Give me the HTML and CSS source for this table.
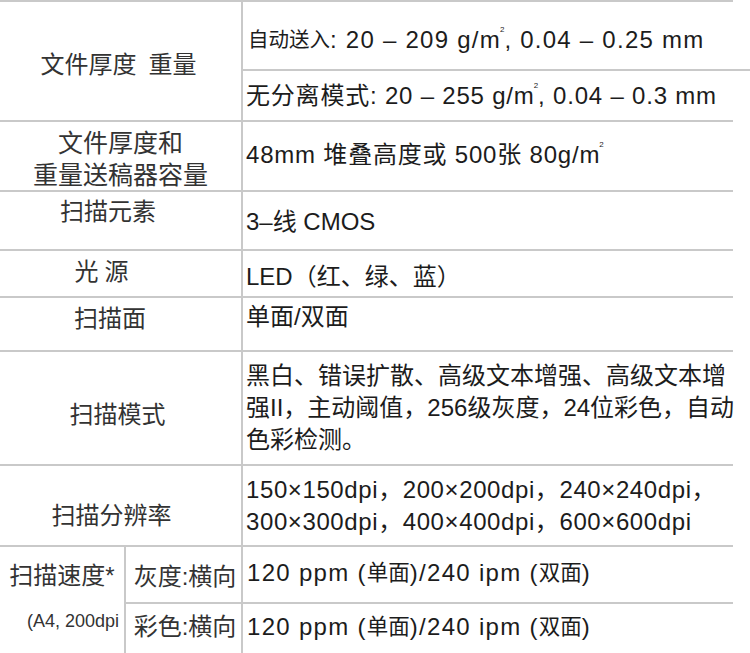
FILE: index.html
```html
<!DOCTYPE html>
<html lang="zh-CN">
<head>
<meta charset="utf-8">
<title>扫描规格</title>
<link rel="stylesheet" href="styles.css">
</head>
<body>
<div class="spec">
  <div class="cell lab lab-thick">文件厚度&ensp;重量</div>
  <div class="cell val val-auto"><span class="cjk-s">自动送入</span>: 20 – 209 g/m<span class="sq">2</span>, 0.04 – 0.25 mm</div>
  <div class="cell val val-sep">无分离模式: 20 – 255 g/m<span class="sq">2</span>, 0.04 – 0.3 mm</div>

  <div class="cell lab lab-feeder">文件厚度和<br>重量送稿器容量</div>
  <div class="cell val val-feeder">48mm 堆叠高度或 500张 80g/m<span class="sq">2</span></div>

  <div class="cell lab lab-sensor">扫描元素</div>
  <div class="cell val val-sensor">3–线 CMOS</div>

  <div class="cell lab lab-light">光源</div>
  <div class="cell val val-light">LED（红、绿、蓝）</div>

  <div class="cell lab lab-side">扫描面</div>
  <div class="cell val val-side">单面/双面</div>

  <div class="cell lab lab-mode">扫描模式</div>
  <div class="cell val val-mode">黑白、错误扩散、高级文本增强、高级文本增<br>强II，主动阈值，256级灰度，24位彩色，自动<br>色彩检测。</div>

  <div class="cell lab lab-res">扫描分辨率</div>
  <div class="cell val val-res">150×150dpi，200×200dpi，240×240dpi，<br>300×300dpi，400×400dpi，600×600dpi</div>

  <div class="cell speed">
    <div class="speed-title">扫描速度*</div>
    <div class="speed-note">(A4, 200dpi</div>
  </div>
  <div class="cell sub sub-gray">灰度:横向</div>
  <div class="cell val val-ppm val-gray">120 ppm (<span class="cjk-s2">单面</span>)/240 ipm (<span class="cjk-s2">双面</span>)</div>
  <div class="cell sub sub-color">彩色:横向</div>
  <div class="cell val val-ppm val-color">120 ppm (<span class="cjk-s2">单面</span>)/240 ipm (<span class="cjk-s2">双面</span>)</div>
</div>
</body>
</html>
```

FILE: styles.css
```css
html, body {
  margin: 0;
  padding: 0;
  background: #ffffff;
}

body {
  font-family: "Liberation Sans", "Noto Sans CJK SC", sans-serif;
  font-size: 24px;
}

.spec {
  width: 733px;
  display: grid;
  grid-template-columns: 126px 117px 490px;
  grid-template-rows: 69px 51px 70px 59px 47px 54px 114px 81px 57px 49px;
  border-top: 2px solid #c9c9c9;
}

.cell {
  box-sizing: border-box;
  border-bottom: 2px solid #c9c9c9;
  display: flex;
  align-items: center;
  line-height: 32px;
  white-space: nowrap;
}

/* label column */
.lab {
  grid-column: 1 / 3;
  border-right: 2px solid #c9c9c9;
  justify-content: center;
  text-align: center;
  color: #333333;
}

.lab-thick { grid-row: span 2; padding-top: 8px; padding-right: 4px; }
.lab-feeder { font-size: 25px; padding-top: 6px; }
.lab-sensor { padding-bottom: 17px; padding-right: 25px; }
.lab-light { padding-bottom: 3px; padding-right: 32px; letter-spacing: 6px; }
.lab-side { padding-bottom: 10px; padding-right: 21px; }
.lab-mode { padding-top: 14px; padding-right: 6px; }
.lab-res { padding-top: 21px; padding-right: 18px; }

/* value column */
.val {
  grid-column: 3;
  padding-left: 3px;
  color: #1c1c1c;
  letter-spacing: 0.8px;
}

.val-auto {
  position: relative;
  padding-left: 5px;
  padding-top: 9px;
  letter-spacing: 1.25px;
}

.val-auto::after {
  content: "";
  position: absolute;
  right: -17px;
  bottom: -2px;
  width: 17px;
  height: 2px;
  background: #c9c9c9;
}

.cjk-s { font-size: 20.5px; letter-spacing: 0; }
.cjk-s2 { font-size: 21.5px; letter-spacing: 0; }

.sq {
  font-size: 8px;
  letter-spacing: 0;
  position: relative;
  top: -10px;
  margin-left: -1px;
  line-height: 0;
}

.val-feeder { padding-bottom: 2px; }
.val-sensor { padding-top: 3px; letter-spacing: 0; }
.val-light { padding-top: 7px; letter-spacing: 0; }
.val-side { padding-bottom: 14px; letter-spacing: 0; }
.val-mode { letter-spacing: 0; }
.val-res { letter-spacing: 0.6px; }
.val-ppm { letter-spacing: 1.3px; padding-left: 4px; }
.val-gray { padding-bottom: 3px; }
.val-color { padding-bottom: 3px; border-bottom: none; }

/* scan speed block */
.speed {
  grid-column: 1;
  grid-row: span 2;
  border-right: 2px solid #c9c9c9;
  border-bottom: none;
  flex-direction: column;
  align-items: stretch;
  justify-content: flex-start;
  padding-top: 13px;
  color: #333333;
}

.speed-title {
  text-align: center;
  line-height: 32px;
}

.speed-note {
  margin-top: 19px;
  font-size: 18px;
  line-height: 20px;
  text-align: right;
  padding-right: 5px;
}

.sub {
  grid-column: 2;
  border-right: 2px solid #c9c9c9;
  justify-content: center;
  color: #333333;
}

.sub-gray { padding-top: 5px; padding-left: 3px; }
.sub-color { padding-bottom: 3px; padding-left: 3px; border-bottom: none; }
```
